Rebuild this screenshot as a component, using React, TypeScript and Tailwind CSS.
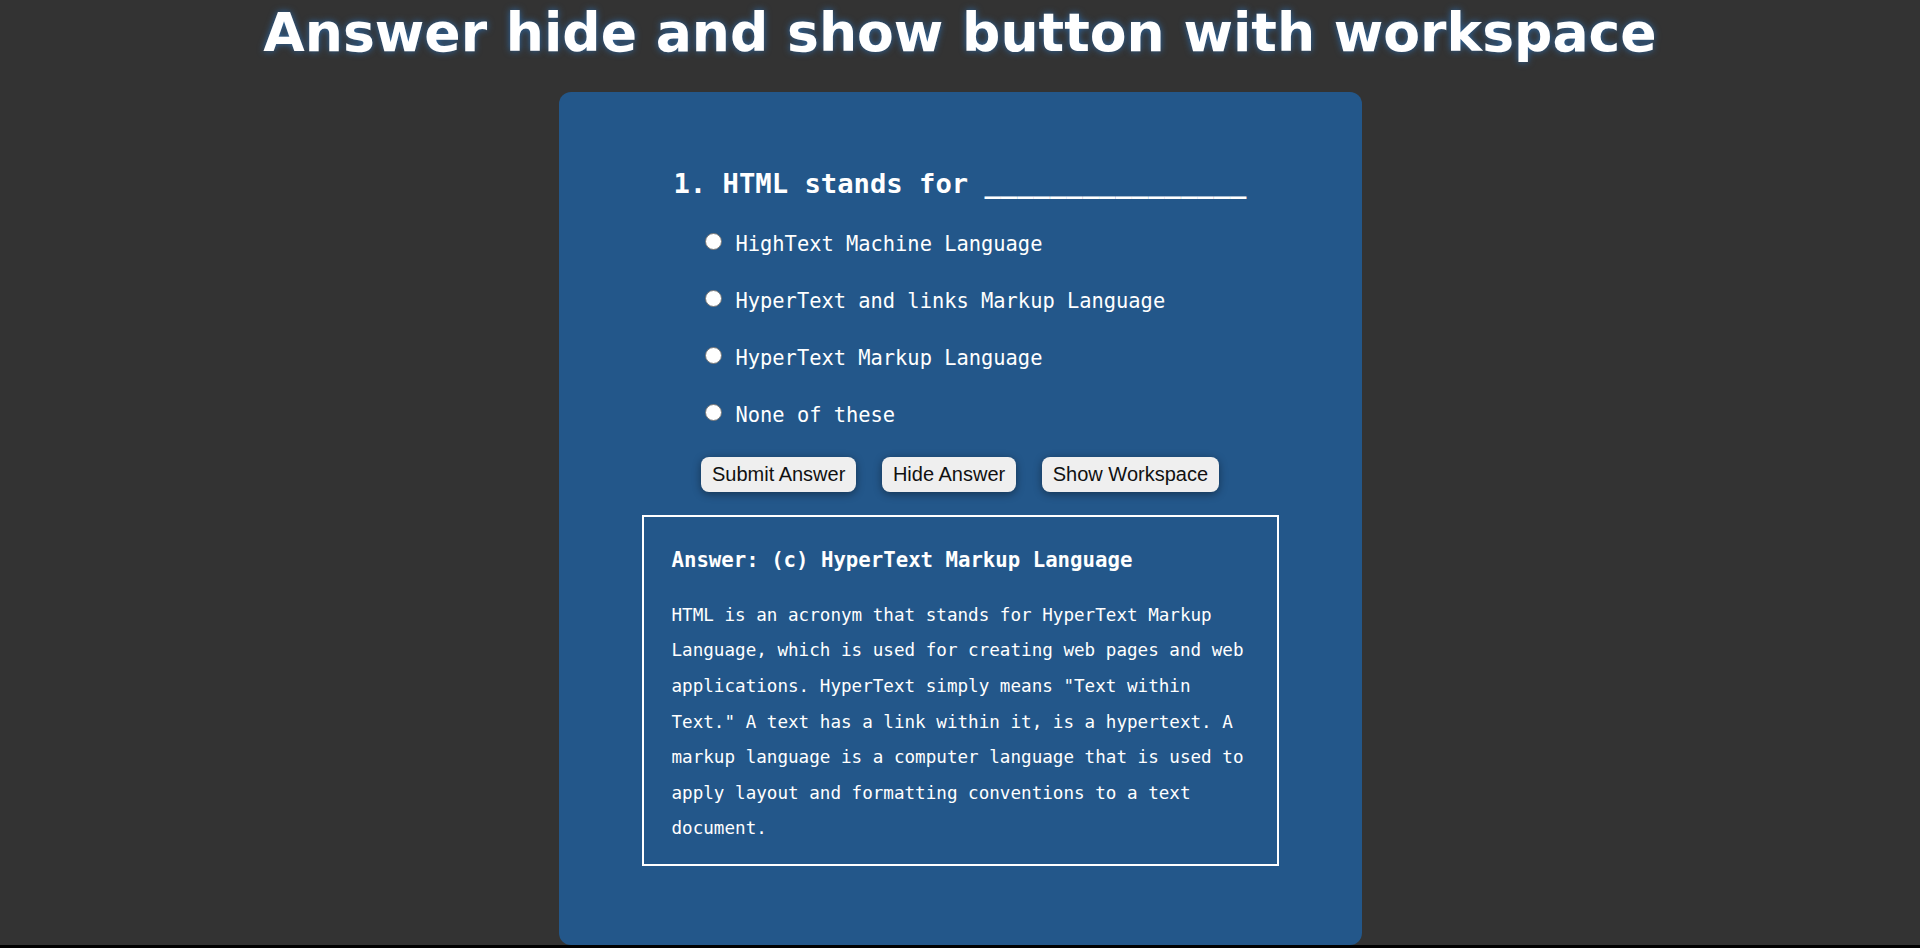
import React from "react";

const mono = { fontFamily: '"DejaVu Sans Mono", "Liberation Mono", monospace' };

function Option({ label }: { label: string }) {
  return (
    <label className="flex items-start h-[24px]">
      <span className="mt-[1px] w-[17px] h-[17px] rounded-full bg-white border border-[#767676] shrink-0" />
      <span className="ml-[14px] text-[20.4px] leading-[24px] text-white">{label}</span>
    </label>
  );
}

function Btn({ children }: { children: React.ReactNode }) {
  return (
    <button className="h-[35px] px-[10.6px] rounded-[8px] bg-[#efefef] text-[#111] text-[20px] leading-[35px] shadow-[0_2px_8px_rgba(0,0,0,0.4)] font-['Liberation_Sans',Arial,sans-serif]">
      {children}
    </button>
  );
}

export default function App() {
  return (
    <div className="h-[948px] bg-black overflow-hidden">
      <div className="h-[945px] bg-[#333333] flex flex-col">
        <h1 className="pt-[6px] text-center text-white font-bold text-[53.6px] leading-[54px] font-['DejaVu_Sans',Verdana,sans-serif] [text-shadow:0_0_7px_#2f6aa6]">
          Answer hide and show button with workspace
        </h1>
        <div
          className="mt-[32px] mx-auto w-[803px] h-[853px] rounded-[12px] bg-[#23578a] flex flex-col pt-[76px]"
          style={mono}
        >
          <div className="ml-[115px] w-[576px]">
            <h2 className="text-white font-bold text-[27.2px] leading-[32px] whitespace-pre">
              1. HTML stands for ________________
            </h2>
            <div className="mt-[32.2px] pl-[31px] flex flex-col gap-[32.8px]">
              <Option label="HighText Machine Language" />
              <Option label="HyperText and links Markup Language" />
              <Option label="HyperText Markup Language" />
              <Option label="None of these" />
            </div>
          </div>
          <div className="mt-[30.4px] flex justify-center gap-[26.4px]">
            <Btn>Submit Answer</Btn>
            <Btn>Hide Answer</Btn>
            <Btn>Show Workspace</Btn>
          </div>
          <div className="mt-[23px] mx-auto w-[637px] h-[351px] border-2 border-white pl-[28px] pr-[28px] pt-[30.85px] text-white">
            <h3 className="font-bold text-[20.7px] leading-[24px]">
              Answer: (c) HyperText Markup Language
            </h3>
            <p className="mt-[26px] text-[17.6px] leading-[35.6px]">
              HTML is an acronym that stands for HyperText Markup Language, which is used for creating web pages and web applications. HyperText simply means "Text within Text." A text has a link within it, is a hypertext. A markup language is a computer language that is used to apply layout and formatting conventions to a text document.
            </p>
          </div>
        </div>
      </div>
    </div>
  );
}
